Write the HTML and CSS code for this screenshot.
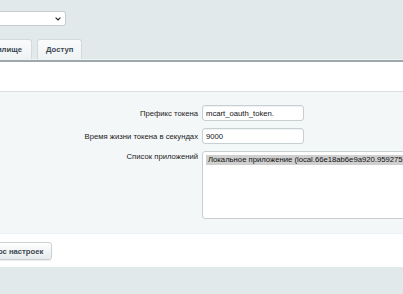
FILE: index.html
```html
<!DOCTYPE html>
<html lang="ru">
<head>
<meta charset="utf-8">
<link rel="stylesheet" href="styles.css">
</head>
<body>
<div class="page">
  <div class="toolbar">
    <div class="select">
      <svg class="chev" width="6" height="4" viewBox="0 0 6 4"><polyline points="0.6,0.6 3,3 5.4,0.6" fill="none" stroke="#222" stroke-width="1.1"/></svg>
    </div>
  </div>
  <div class="tabs">
    <div class="tab tab-first">Хранилище</div>
    <div class="tab">Доступ</div>
  </div>
  <div class="tabline"></div>
  <div class="panel">
    <div class="panel-head"></div>
    <div class="form">
      <div class="row">
        <div class="label">Префикс токена</div>
        <div class="input">mcart_oauth_token.</div>
      </div>
      <div class="row">
        <div class="label">Время жизни токена в секундах</div>
        <div class="input">9000</div>
      </div>
      <div class="row row-top">
        <div class="label">Список приложений</div>
        <div class="listbox">
          <div class="option selected">Локальное приложение (local.66e18ab6e9a920.95927519)</div>
        </div>
      </div>
    </div>
    <div class="footer">
      <button class="btn">Сброс настроек</button>
    </div>
  </div>
</div>
</body>
</html>
```
FILE: styles.css
```css
html, body {
  margin: 0;
  padding: 0;
}
body {
  background: #e2e9eb;
  font-family: "Liberation Sans", Arial, sans-serif;
  font-size: 7.7px;
  color: #222;
  overflow: hidden;
  width: 403px;
  height: 294px;
}
.page {
  width: 403px;
}
.toolbar {
  padding-top: 11px;
  height: 15px;
}
.select {
  margin-left: -60px;
  width: 120px;
  height: 13px;
  background: #fff;
  border: 1px solid #c3cccf;
  border-radius: 3px;
  display: flex;
  justify-content: flex-end;
  align-items: center;
  padding-right: 4px;
}
.chev {
  display: block;
}
.tabs {
  display: flex;
  gap: 5px;
  margin-top: 13px;
  margin-left: -30px;
  height: 20px;
}
.tab {
  box-sizing: border-box;
  height: 20px;
  padding: 0 8px;
  display: flex;
  align-items: center;
  justify-content: center;
  font-weight: bold;
  color: #3a4650;
  background: linear-gradient(#fafbfb, #eef2f3);
  border: 1px solid #d3dadc;
  border-bottom: none;
  border-radius: 3px 3px 0 0;
}
.tab-first {
  width: 62px;
  justify-content: flex-end;
  padding-right: 9px;
}
.tabline {
  height: 1px;
  background: #eef3f3;
  border-bottom: 2px solid #9ea7ab;
}
.panel {
  background: #fff;
}
.panel-head {
  height: 29px;
  border-bottom: 1px solid #d9dfe0;
}
.form {
  background: #f4f7f8;
  padding: 13px 0 14px 0;
  display: flex;
  flex-direction: column;
  gap: 7px;
  border-bottom: 1px solid #eef0f8;
}
.row {
  display: flex;
  align-items: center;
}
.row-top {
  align-items: flex-start;
}
.label {
  text-align: right;
  padding-right: 4px;
  box-sizing: border-box;
  flex: none;
  width: 202px;
  color: #1a1a1a;
}
.row-top .label {
  padding-top: 1px;
}
.input {
  box-sizing: border-box;
  width: 102px;
  height: 16px;
  background: #fff;
  border: 1px solid #c7cfd2;
  border-radius: 3px;
  padding: 0 3px;
  display: flex;
  align-items: center;
  color: #111;
  box-shadow: inset 0 1px 1px rgba(0,0,0,0.06);
}
.listbox {
  box-sizing: border-box;
  width: 230px;
  height: 68px;
  background: #fff;
  border: 1px solid #c7cfd2;
  border-radius: 3px;
  padding: 3px 0 0 3px;
  overflow: hidden;
  flex: none;
}
.option {
  white-space: nowrap;
  height: 10px;
  line-height: 10px;
  padding-left: 2px;
  color: #111;
}
.option.selected {
  background: #cfcfcf;
}
.footer {
  height: 33px;
  padding-top: 8px;
  box-sizing: border-box;
}
.btn {
  margin-left: -26px;
  height: 18px;
  padding: 0 8px;
  font-family: inherit;
  font-size: 7.7px;
  font-weight: bold;
  color: #3a4650;
  background: linear-gradient(#ffffff, #e6ebec);
  border: 1px solid #c9d1d3;
  border-radius: 3px;
  box-shadow: 0 1px 1px rgba(0,0,0,0.08);
}
```
